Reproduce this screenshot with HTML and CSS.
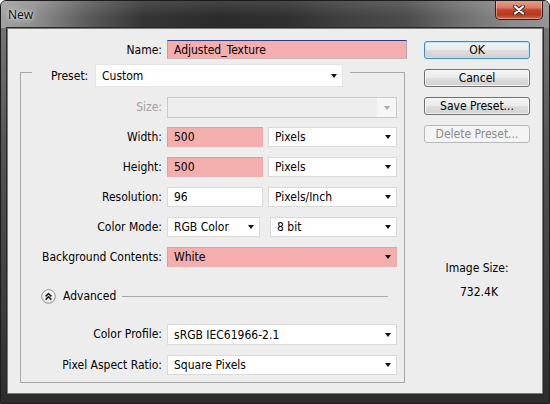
FILE: index.html
```html
<!DOCTYPE html>
<html>
<head>
<meta charset="utf-8">
<title>New</title>
<link rel="stylesheet" href="styles.css">
</head>
<body>
<div class="window">
  <div class="titlebar">
    <span class="title">New</span>
    <div class="close">
      <svg width="12" height="10" viewBox="0 0 12 10">
        <path d="M2 1.5 L10 8.5 M10 1.5 L2 8.5" stroke="#3a2a2a" stroke-width="4" stroke-linecap="round"/>
        <path d="M2 1.5 L10 8.5 M10 1.5 L2 8.5" stroke="#ffffff" stroke-width="2.2" stroke-linecap="round"/>
      </svg>
    </div>
  </div>
  <div class="content">
    <div class="main">
      <div class="name-row">
        <span class="lbl">Name:</span>
        <div class="field name-field">Adjusted_Texture</div>
      </div>
      <div class="group">
        <div class="preset-row">
          <span class="preset-lbl">Preset:</span>
          <div class="field select preset-select"><span>Custom</span><span class="arrow"></span></div>
        </div>
        <div class="grid grid-top">
          <span class="lbl dis">Size:</span>
          <div class="field select size-select"><span></span><span class="arrow-box"><span class="arrow gray"></span></span></div>

          <span class="lbl">Width:</span>
          <div class="pair">
            <div class="field pink num">500</div>
            <div class="field select unit"><span>Pixels</span><span class="arrow"></span></div>
          </div>

          <span class="lbl">Height:</span>
          <div class="pair">
            <div class="field pink num">500</div>
            <div class="field select unit"><span>Pixels</span><span class="arrow"></span></div>
          </div>

          <span class="lbl">Resolution:</span>
          <div class="pair">
            <div class="field num">96</div>
            <div class="field select unit"><span>Pixels/Inch</span><span class="arrow"></span></div>
          </div>

          <span class="lbl">Color Mode:</span>
          <div class="pair wide-gap">
            <div class="field select mode"><span>RGB Color</span><span class="arrow"></span></div>
            <div class="field select bits"><span>8 bit</span><span class="arrow"></span></div>
          </div>

          <span class="lbl">Background Contents:</span>
          <div class="field select pink"><span>White</span><span class="arrow"></span></div>
        </div>
        <div class="advanced">
          <svg class="adv-icon" width="15" height="15" viewBox="0 0 15 15">
            <defs>
              <linearGradient id="ag" x1="0" y1="0" x2="0" y2="1">
                <stop offset="0" stop-color="#ffffff"/>
                <stop offset="1" stop-color="#e4e4e4"/>
              </linearGradient>
            </defs>
            <circle cx="7.5" cy="7.5" r="6.8" fill="url(#ag)" stroke="#8e8e8e" stroke-width="1"/>
            <path d="M4.6 7.4 L7.5 4.6 L10.4 7.4 M4.6 10.6 L7.5 7.8 L10.4 10.6" fill="none" stroke="#1e1e1e" stroke-width="1.5"/>
          </svg>
          <span class="adv-text">Advanced</span>
          <span class="adv-line"></span>
        </div>
        <div class="grid grid-bottom">
          <span class="lbl">Color Profile:</span>
          <div class="field select cp"><span>sRGB IEC61966-2.1</span><span class="arrow"></span></div>
          <span class="lbl">Pixel Aspect Ratio:</span>
          <div class="field select"><span>Square Pixels</span><span class="arrow"></span></div>
        </div>
      </div>
    </div>
    <div class="side">
      <div class="btn default">OK</div>
      <div class="btn">Cancel</div>
      <div class="btn">Save Preset...</div>
      <div class="btn disabled">Delete Preset...</div>
      <div class="size-info">
        <div class="size-lbl">Image Size:</div>
        <div class="size-val">732.4K</div>
      </div>
    </div>
  </div>
</div>
</body>
</html>
```

FILE: styles.css
```css
* { box-sizing: border-box; }
html, body { margin: 0; padding: 0; }
body {
  width: 550px;
  height: 404px;
  overflow: hidden;
  background: #ffffff;
  font-family: "DejaVu Sans Condensed", "DejaVu Sans", sans-serif;
  font-size: 12px;
  color: #000;
}
.window {
  width: 550px;
  height: 404px;
  display: flex;
  flex-direction: column;
  border: 1px solid #1c1c1c;
  border-radius: 6px 6px 0 0;
  overflow: hidden;
  background: linear-gradient(180deg, #7d7d7d 0%, #555 35%, #3a3a3a 80%, #2c2c2c 100%);
}
.titlebar {
  height: 27px;
  flex: none;
  display: flex;
  align-items: flex-start;
  background:
    linear-gradient(180deg, rgba(255,255,255,0.12) 0%, rgba(255,255,255,0) 60%),
    linear-gradient(90deg, #a2a2a2 0%, #8a8a8a 7%, #5a5a5a 16%, #353535 26%, #2b2b2b 40%, #2f2f2f 52%, #3f3f3f 62%, #4c4c4c 74%, #6f6f6f 84%, #8a8a8a 93%, #959595 100%);
}
.title {
  font-family: "Noto Sans", "DejaVu Sans", sans-serif;
  font-size: 12px;
  line-height: 16px;
  margin: 6px 0 0 7px;
  color: #111;
  text-shadow: 0 0 6px rgba(255,255,255,0.9), 0 0 3px rgba(255,255,255,0.8);
}
.close {
  margin: -1px 6px 0 auto;
  width: 48px;
  height: 20px;
  display: flex;
  align-items: center;
  justify-content: center;
  border: 1px solid #3c1a12;
  border-top: none;
  border-radius: 0 0 5px 5px;
  background: linear-gradient(180deg, #e6a392 0%, #d77c66 40%, #c4432a 52%, #b8381e 78%, #cf6a4c 100%);
  box-shadow: inset 0 0 0 1px rgba(255,220,210,0.45);
}
.content {
  flex: 1;
  margin: 0 6px 9px 6px;
  border: 1px solid #7a7a7a;
  background: #ededed;
  display: flex;
  box-shadow: 0 0 0 1px #2a2a2a;
}
.main {
  width: 399px;
  padding: 11px 0 0 12px;
}
.name-row {
  display: grid;
  grid-template-columns: 142px 240px;
  column-gap: 5px;
  height: 19px;
}
.lbl {
  text-align: right;
  line-height: 21px;
  white-space: nowrap;
}
.name-row .lbl { line-height: 20px; }
.lbl.dis { color: #a0a0a0; }
.field {
  height: 20px;
  border: 1px solid #dadada;
  background: #ffffff;
  padding: 0 6px;
  line-height: 18px;
  white-space: nowrap;
  display: flex;
  align-items: center;
  justify-content: space-between;
}
.name-field {
  height: 19px;
  background: #f4aeae;
  border-color: #2b3b8c #b0a4b4 #d2b6b8 #b0a4b4;
}
.pink {
  background: #f4aeae;
  border-color: #d6a2a2 #e7acac #eab2b2 #d6a2a2;
}
.arrow {
  width: 0;
  height: 0;
  border-left: 3.5px solid transparent;
  border-right: 3.5px solid transparent;
  border-top: 4px solid #111;
  margin-right: -1px;
}
.arrow.gray { border-top-color: #a8a8a8; margin-right: 0; }
.group {
  margin-top: 13px;
  width: 385px;
  border: 1px solid #a8a8a8;
  padding: 0 7px 7px 0;
}
.preset-row {
  display: flex;
  align-items: center;
  width: fit-content;
  margin: -9px 0 0 11px;
  padding: 0 7px 0 19px;
  background: #ededed;
  gap: 5px;
  height: 23px;
}
.preset-lbl { width: 39px; }
.preset-select {
  width: 248px;
  height: 23px;
  border-color: #e4e4e4;
}
.grid {
  display: grid;
  grid-template-columns: 141px 230px;
  column-gap: 5px;
  row-gap: 10px;
  grid-auto-rows: 20px;
}
.grid-top { margin-top: 10px; }
.grid-bottom { margin-top: 21px; grid-template-rows: 21px 20px; }
.cp { height: 21px; }
.size-select {
  height: 21px;
  background: #eeeeee;
  border-color: #c9c9c9;
  padding-right: 0;
}
.arrow-box {
  width: 19px;
  height: 19px;
  background: #f6f6f6;
  display: flex;
  align-items: center;
  justify-content: center;
}
.pair {
  display: flex;
  gap: 5px;
}
.pair.wide-gap { gap: 10px; }
.num { width: 96px; }
.unit { width: 129px; }
.mode { width: 93px; }
.bits { width: 127px; }
.advanced {
  margin-top: 22px;
  height: 14px;
  padding: 0 9px 0 20px;
  display: flex;
  align-items: center;
}
.adv-icon { flex: none; margin: 0 7px 0 0; }
.adv-text { line-height: 14px; }
.adv-line {
  flex: 1;
  height: 1px;
  margin-left: 6px;
  background: #a9a9a9;
}
.side {
  margin-left: 17px;
  width: 106px;
  padding-top: 12px;
  display: flex;
  flex-direction: column;
  gap: 10px;
}
.btn {
  height: 18px;
  border: 1px solid #707070;
  border-radius: 3px;
  background: linear-gradient(180deg, #f3f3f3 0%, #ebebeb 48%, #dedede 52%, #d0d0d0 100%);
  box-shadow: inset 0 0 0 1px rgba(255,255,255,0.75);
  text-align: center;
  line-height: 16px;
  white-space: nowrap;
}
.btn.default {
  border-color: #3d8ec9;
  box-shadow: inset 0 0 0 1px #b9e5fb;
}
.btn.disabled {
  border-color: #b4b8bb;
  background: #f4f4f4;
  box-shadow: none;
  color: #8a8a8a;
}
.size-info {
  margin-top: 108px;
  text-align: center;
}
.size-lbl { line-height: 14px; }
.size-val { line-height: 14px; margin-top: 10px; padding-left: 4px; }
```
